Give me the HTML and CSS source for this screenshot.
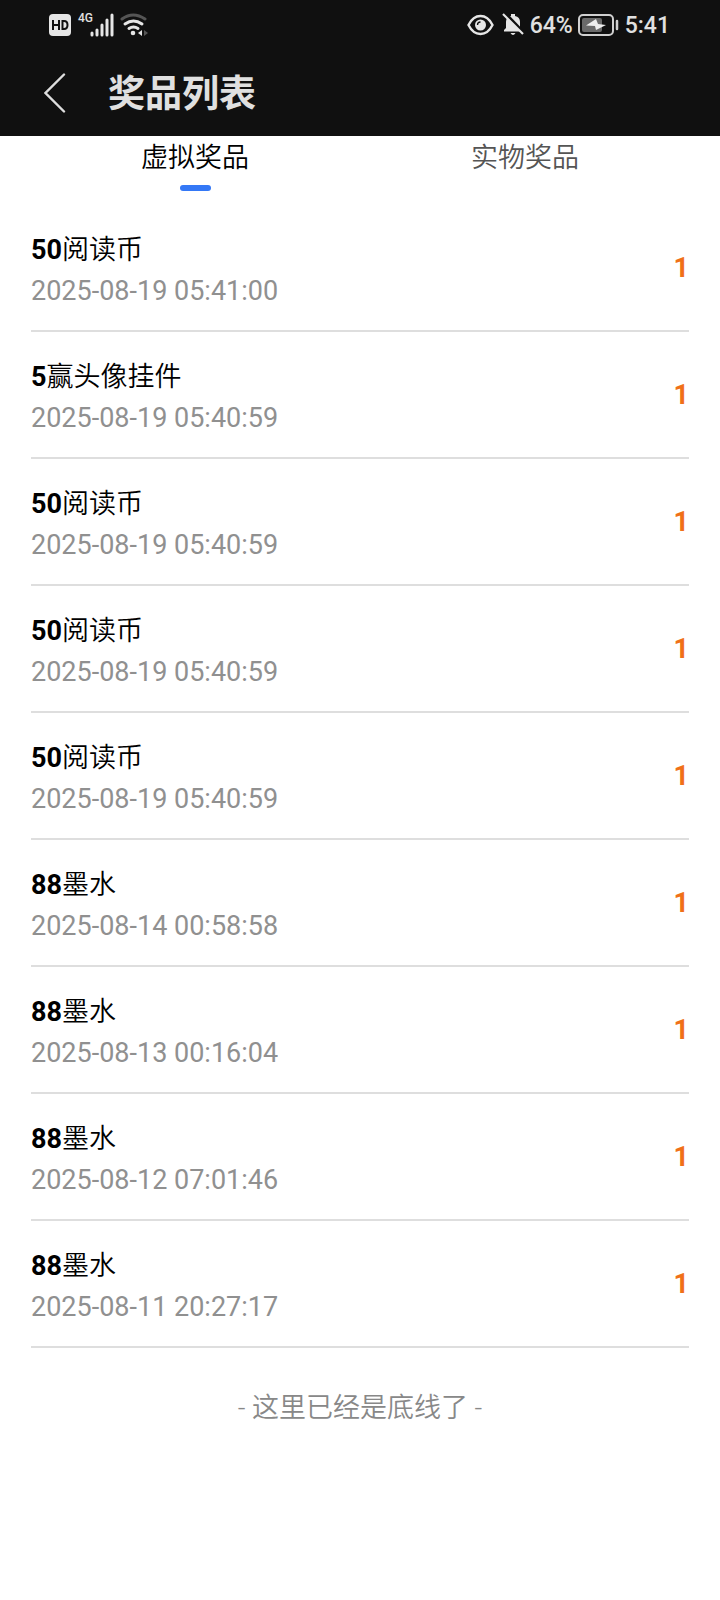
FILE: index.html
```html
<!DOCTYPE html>
<html lang="zh-CN">
<head>
<meta charset="utf-8">
<meta name="viewport" content="width=device-width, initial-scale=1">
<title>奖品列表</title>
<link rel="stylesheet" href="styles.css">
</head>
<body>
<header class="top">
  <div class="status">
    <div class="status-side">
      <svg class="hd" width="22" height="22" viewBox="0 0 22 22" aria-hidden="true"><rect width="22" height="22" rx="4" fill="#e6e6e6"/><path d="M4 6v10M10 6v10M4 11h6M13.500 7v8h1.500q3.500 0 3.500-4t-3.500-4z" fill="none" stroke="#101010" stroke-width="2"/></svg>
      <span class="net">4G</span>
      <svg class="signal" width="24" height="24" viewBox="0 0 24 24" aria-hidden="true"><path d="M2 20v2M7 17v5M12 12v10M17 7v15M22 2v20" stroke="#e6e6e6" stroke-width="3" stroke-linecap="round"/></svg>
      <svg class="wifi" width="28" height="24" viewBox="0 0 28 24" fill="none" stroke-linecap="round" aria-hidden="true"><path d="M2 6q11-8 23 0" stroke="#555" stroke-width="3"/><path d="M5 11q8.500-6 17 0M9 15.500q4.500-3 9 0" stroke="#e6e6e6" stroke-width="3"/><circle cx="13" cy="20" r="2.300" fill="#e6e6e6"/><path d="M22 17v6l-4-3z" fill="#e6e6e6"/><path d="M24 17v6l4-3z" fill="#555"/></svg>
    </div>
    <div class="status-side">
      <svg width="27" height="22" viewBox="0 0 27 22" aria-hidden="true"><path d="M1.500 11Q6 2 13.500 2t12 9q-4.500 9-12 9t-12-9z" fill="none" stroke="#e6e6e6" stroke-width="2.400"/><circle cx="13.500" cy="11" r="5.500" fill="#e6e6e6"/><path d="M10.500 11q0-3 3-3" fill="none" stroke="#101010" stroke-width="1.300"/></svg>
      <svg class="bell" width="22" height="23" viewBox="0 0 22 23" aria-hidden="true"><path d="M2 18.500v-1.500l2-2V9q0-5 5-6V1h4v2q5 1 5 6v6l2 2v1.500zM8.500 20h5q-2.500 4-5 0z" fill="#e6e6e6"/><path d="M3 0l18 19" stroke="#101010" stroke-width="3"/><path d="M1 1l20 20" stroke="#e6e6e6" stroke-width="2.200"/></svg>
      <span class="percent">64%</span>
      <svg class="battery" width="41" height="22" viewBox="0 0 41 22" aria-hidden="true"><rect x="1" y="1" width="34" height="20" rx="4" fill="none" stroke="#d0d0d0" stroke-width="2"/><rect x="4" y="4" width="20" height="14" rx="2" fill="#6a6a6a"/><path d="M18 5L8 11.500l9 .5 1 4 10-5-8-1z" fill="#eee"/><path d="M39 7v8" stroke="#d0d0d0" stroke-width="2.500" stroke-linecap="round"/></svg>
      <span class="clock">5:41</span>
    </div>
  </div>
  <div class="bar">
    <button class="back" type="button" aria-label="返回"><svg width="22" height="40" viewBox="0 0 22 40" aria-hidden="true"><path d="M20 1.500L1.500 20L20 38.500" fill="none" stroke="#dedede" stroke-width="2.400" stroke-linecap="round"/></svg></button>
    <h1 class="title">奖品列表</h1>
  </div>
</header>
<nav class="tabs">
  <button class="tab tab-active" type="button">虚拟奖品</button>
  <button class="tab" type="button">实物奖品</button>
</nav>
<main class="content">
  <ul class="list">
    <li class="item"><div class="info"><p class="name"><b>50</b>阅读币</p><time class="date">2025-08-19 05:41:00</time></div><span class="count">1</span></li>
    <li class="item"><div class="info"><p class="name"><b>5</b>赢头像挂件</p><time class="date">2025-08-19 05:40:59</time></div><span class="count">1</span></li>
    <li class="item"><div class="info"><p class="name"><b>50</b>阅读币</p><time class="date">2025-08-19 05:40:59</time></div><span class="count">1</span></li>
    <li class="item"><div class="info"><p class="name"><b>50</b>阅读币</p><time class="date">2025-08-19 05:40:59</time></div><span class="count">1</span></li>
    <li class="item"><div class="info"><p class="name"><b>50</b>阅读币</p><time class="date">2025-08-19 05:40:59</time></div><span class="count">1</span></li>
    <li class="item"><div class="info"><p class="name"><b>88</b>墨水</p><time class="date">2025-08-14 00:58:58</time></div><span class="count">1</span></li>
    <li class="item"><div class="info"><p class="name"><b>88</b>墨水</p><time class="date">2025-08-13 00:16:04</time></div><span class="count">1</span></li>
    <li class="item"><div class="info"><p class="name"><b>88</b>墨水</p><time class="date">2025-08-12 07:01:46</time></div><span class="count">1</span></li>
    <li class="item"><div class="info"><p class="name"><b>88</b>墨水</p><time class="date">2025-08-11 20:27:17</time></div><span class="count">1</span></li>
  </ul>
  <p class="end">- 这里已经是底线了 -</p>
</main>
</body>
</html>
```
FILE: styles.css
```css
* { box-sizing: border-box; }
body {
  margin: 0;
  background: #fff;
  color: #000;
  font: 27px/40px Roboto, "Noto Sans CJK SC", sans-serif;
}
button {
  padding: 0;
  border: 0;
  background: none;
  color: inherit;
  font: inherit;
  cursor: pointer;
}
.top { background: #101010; color: #e0e0e0; }
.status {
  display: flex;
  justify-content: space-between;
  height: 49px;
  padding: 0 50px 0 49px;
}
.status-side { display: flex; align-items: center; }
.net {
  align-self: flex-start;
  margin: 12px 0 0 7px;
  font-size: 12px;
  line-height: 12px;
  font-weight: 500;
}
.signal { margin-left: -3px; }
.wifi { margin-left: 6px; }
.bell { margin-left: 8px; }
.percent, .clock {
  padding-top: 2px;
  font-size: 23px;
  font-weight: 500;
}
.percent { margin-left: 6px; }
.battery { margin-left: 5px; }
.clock { margin-left: 6px; }
.bar {
  display: flex;
  align-items: center;
  height: 87px;
  padding-left: 44px;
}
.back { display: flex; }
.title {
  margin: 0 0 0 42px;
  padding-top: 4px;
  font-size: 37px;
  line-height: 48px;
  font-weight: 700;
}
.tabs { display: flex; padding: 0 30px; }
.tab {
  flex: 1;
  display: flex;
  flex-direction: column;
  align-items: center;
  height: 56px;
  padding-top: 2px;
  color: #555;
  font-weight: 350;
}
.tab-active { color: #000; }
.tab-active::after {
  content: "";
  width: 31px;
  height: 6px;
  margin-top: 7px;
  border-radius: 3px;
  background: #3478f6;
}
.content { padding: 13px 31px 0; }
.list { margin: 0; padding: 0; list-style: none; }
.item {
  display: flex;
  justify-content: space-between;
  align-items: center;
  border-bottom: 2px solid #dedede;
}
.info { padding: 25px 0 19px; }
.name { margin: 0; line-height: 41px; font-weight: 350; }
.name b { font-weight: 700; }
.date { display: block; color: #909090; }
.count { color: #f07018; font-weight: 700; }
.end {
  margin: 40px 0 0;
  color: #888;
  font-weight: 350;
  text-align: center;
}
```
